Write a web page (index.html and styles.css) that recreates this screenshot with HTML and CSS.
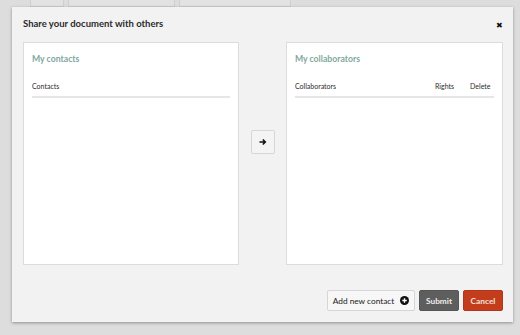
FILE: index.html
```html
<!DOCTYPE html>
<html>
<head>
<meta charset="utf-8">
<link rel="stylesheet" href="styles.css">
</head>
<body>
<div class="tabs">
  <div class="tab t1"></div>
  <div class="tab t2"></div>
  <div class="tab t3"></div>
</div>
<div class="modal">
  <div class="modal-head">
    <h1 class="title">Share your document with others</h1>
    <span class="close">&#x2716;</span>
  </div>
  <div class="modal-body">
    <div class="panel">
      <h2 class="panel-title">My contacts</h2>
      <div class="thead">
        <span class="col-main">Contacts</span>
      </div>
    </div>
    <div class="mid">
      <button class="arrow-btn"><svg width="8" height="8" viewBox="0 0 8 8"><path d="M0.5 4H6M3.8 1.5L6.3 4L3.8 6.5" fill="none" stroke="#111" stroke-width="1.6"/></svg></button>
    </div>
    <div class="panel panel-right">
      <h2 class="panel-title">My collaborators</h2>
      <div class="thead">
        <span class="col-main">Collaborators</span>
        <span class="col-rights">Rights</span>
        <span class="col-delete">Delete</span>
      </div>
    </div>
  </div>
  <div class="modal-foot">
    <button class="btn btn-add">Add new contact <svg class="plus" width="9" height="9" viewBox="0 0 10 10"><circle cx="5" cy="5" r="5" fill="#111"/><path d="M5 2.5V7.5M2.5 5H7.5" stroke="#fff" stroke-width="1.5"/></svg></button>
    <button class="btn btn-submit">Submit</button>
    <button class="btn btn-cancel">Cancel</button>
  </div>
</div>
</body>
</html>
```
FILE: styles.css
```css
html, body {
  margin: 0;
  padding: 0;
}
body {
  background: #dddddd;
  width: 520px;
  height: 335px;
  overflow: hidden;
  position: relative;
  font-family: Lato, "Open Sans", sans-serif;
  color: #333;
}
.tabs {
  display: flex;
  padding-left: 30px;
  gap: 4px;
}
.tab {
  height: 7px;
  border: 1px solid #cfcfcf;
  border-top: none;
  background: #e2e2e2;
  box-sizing: border-box;
}
.t1 { width: 34px; }
.t2 { width: 107px; }
.t3 { width: 112px; }
.modal {
  position: absolute;
  left: 12px;
  top: 7px;
  width: 501px;
  height: 315px;
  background: #f2f2f2;
  box-shadow: 0 1px 3px rgba(0,0,0,0.35);
  box-sizing: border-box;
  padding: 0 10px 0 11px;
  display: flex;
  flex-direction: column;
}
.modal-head {
  height: 35px;
  display: flex;
  align-items: center;
  justify-content: space-between;
  padding-bottom: 2px;
  box-sizing: border-box;
}
.title {
  margin: 0;
  font-size: 9.5px;
  font-weight: 700;
  color: #2b2b2b;
}
.close {
  font-size: 8px;
  color: #111;
  margin-right: 0px;
  margin-top: 2px;
}
.modal-body {
  display: flex;
  height: 223px;
}
.panel {
  width: 217px;
  background: #fff;
  border: 1px solid #dcdcdc;
  box-sizing: border-box;
  padding: 0 8px 0 8px;
}
.panel-right {
  width: 218px;
}
.panel-title {
  margin: 0;
  height: 32px;
  padding-top: 10px;
  box-sizing: border-box;
  font-size: 8.7px;
  font-weight: 700;
  color: #7fa9a0;
  line-height: 12px;
}
.thead {
  display: flex;
  height: 23px;
  align-items: center;
  border-bottom: 2px solid #e6e6e6;
  font-size: 7px;
  color: #2b2b2b;
  padding-top: 1px;
  box-sizing: border-box;
}
.col-main { flex: 1; }
.col-rights { width: 35px; }
.col-delete { width: 24px; }
.mid {
  width: 47px;
  display: flex;
  align-items: center;
  justify-content: center;
  padding-bottom: 23px;
  box-sizing: border-box;
}
.arrow-btn {
  width: 24px;
  height: 24px;
  border: 1px solid #d6d6d6;
  background: #f4f4f4;
  border-radius: 2px;
  padding: 0;
  display: flex;
  align-items: center;
  justify-content: center;
  margin-left: 1px;
}
.modal-foot {
  display: flex;
  justify-content: flex-end;
  gap: 4px;
  padding-top: 25px;
}
.btn {
  height: 21px;
  border-radius: 2px;
  font-family: Lato, "Open Sans", sans-serif;
  font-size: 8.3px;
  padding: 0;
  display: flex;
  align-items: center;
  justify-content: center;
  box-sizing: border-box;
}
.btn-add {
  width: 88px;
  background: #f7f7f7;
  border: 1px solid #d6d6d6;
  color: #222;
  gap: 6px;
}
.btn-submit {
  width: 40px;
  background: #5e5e5e;
  border: 1px solid #555;
  color: #eee;
  font-weight: 700;
}
.btn-cancel {
  width: 40px;
  background: #c33d1c;
  border: 1px solid #b3361a;
  color: #f3e2dc;
  font-weight: 700;
}
```
